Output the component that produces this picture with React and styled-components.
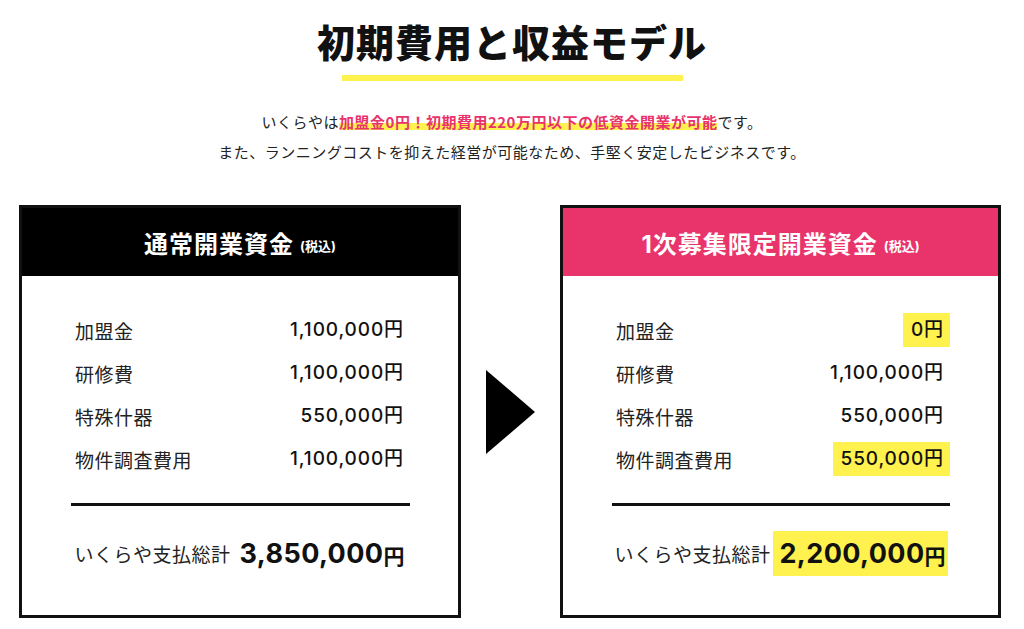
import React from "react";
import styled, { createGlobalStyle } from "styled-components";

const PINK = "#e8346b";
const YELLOW = "#fff24f";
const CJK = `"Noto Sans CJK JP", "Noto Sans", sans-serif`;
const NUM = `Inter, "Noto Sans CJK JP", sans-serif`;

const Global = createGlobalStyle`
  * { box-sizing: border-box; }
  html, body { margin: 0; padding: 0; background: #fff; }
  body { font-family: ${CJK}; color: #111; }
`;

const Page = styled.main`
  width: 1024px;
  display: flex;
  flex-direction: column;
  align-items: center;
  padding-top: 16px;
`;

const Title = styled.h1`
  margin: 0;
  font-family: ${CJK};
  font-weight: 900;
  font-size: 38px;
  line-height: 50px;
  letter-spacing: 1px;
  color: #111;
`;

const TitleBar = styled.div`
  width: 341px;
  height: 6px;
  margin-top: 9px;
  background: ${YELLOW};
`;

const Lead = styled.p`
  margin: 26px 0 0;
  font-size: 15px;
  letter-spacing: 0.5px;
  line-height: 30px;
  text-align: center;
  color: #222;
`;

const Em = styled.strong`
  color: ${PINK};
  font-weight: 700;
  background: linear-gradient(transparent 58%, ${YELLOW} 58%, ${YELLOW} 90%, transparent 90%);
`;

const Compare = styled.section`
  align-self: flex-start;
  display: flex;
  align-items: center;
  margin-top: 38px;
  padding-left: 19px;
`;

const Card = styled.div`
  width: ${(p) => p.$w}px;
  border: 3px solid #111;
  background: #fff;
`;

const CardHead = styled.div`
  height: 68px;
  background: ${(p) => p.$bg};
  color: #fff;
  display: flex;
  align-items: center;
  justify-content: center;
  font-weight: 700;
  font-family: ${NUM};
`;

const HeadMain = styled.span`
  font-size: 24px;
  letter-spacing: 1px;
`;

const HeadSub = styled.span`
  font-size: 13px;
  margin-left: 6px;
  margin-top: 6px;
`;

const CardBody = styled.div`
  padding: 37px 48px 39px 49px;
`;

const Rows = styled.div`
  display: flex;
  flex-direction: column;
  gap: 9px;
  padding-left: 4px;
`;

const Row = styled.div`
  display: flex;
  align-items: center;
  justify-content: space-between;
  height: 34px;
`;

const Label = styled.span`
  font-size: 19px;
  letter-spacing: 0.5px;
  color: #222;
`;

const Value = styled.span`
  font-family: ${NUM};
  font-size: 19px;
  font-weight: 450;
  letter-spacing: 0.9px;
  line-height: 34px;
  padding: 0 6px 0 8px;
  color: #111;
  background: ${(p) => (p.$mark ? YELLOW : "transparent")};
`;

const Divider = styled.hr`
  margin: 27px 0 0;
  border: 0;
  height: 3px;
  background: #111;
`;

const Total = styled.div`
  margin-top: 25px;
  height: 45px;
  display: flex;
  align-items: center;
  justify-content: center;
  white-space: nowrap;
`;

const TotalLabel = styled.span`
  font-size: 19px;
  letter-spacing: 0.5px;
  color: #222;
  flex-shrink: 0;
`;

const TotalAmount = styled.span`
  margin-left: 3px;
  height: 45px;
  display: inline-flex;
  align-items: center;
  flex-shrink: 0;
  padding: 0 2px 0 6px;
  background: ${(p) => (p.$mark ? YELLOW : "transparent")};
`;

const Num = styled.span`
  font-family: ${NUM};
  font-weight: 700;
  font-size: 27px;
  letter-spacing: 0.4px;
  color: #111;
`;

const Yen = styled.span`
  font-weight: 700;
  font-size: 21px;
  margin-top: 3px;
`;

const ArrowWrap = styled.div`
  width: 49px;
  height: 84px;
  margin: 0 25px;
  display: flex;
`;

const Arrow = () => (
  <ArrowWrap>
    <svg width="49" height="84" viewBox="0 0 49 84">
      <polygon points="0,0 49,42 0,84" fill="#000" />
    </svg>
  </ArrowWrap>
);

const CostCard = ({ width, bg, title, items, total, markTotal }) => (
  <Card $w={width}>
    <CardHead $bg={bg}>
      <HeadMain>{title}</HeadMain>
      <HeadSub>(税込)</HeadSub>
    </CardHead>
    <CardBody>
      <Rows>
        {items.map((it) => (
          <Row key={it.label}>
            <Label>{it.label}</Label>
            <Value $mark={it.mark}>{it.value}</Value>
          </Row>
        ))}
      </Rows>
      <Divider />
      <Total>
        <TotalLabel>いくらや支払総計</TotalLabel>
        <TotalAmount $mark={markTotal}>
          <Num>{total}</Num>
          <Yen>円</Yen>
        </TotalAmount>
      </Total>
    </CardBody>
  </Card>
);

export default function App() {
  return (
    <>
      <Global />
      <Page>
        <Title>初期費用と収益モデル</Title>
        <TitleBar />
        <Lead>
          いくらやは<Em>加盟金0円！初期費用220万円以下の低資金開業が可能</Em>です。
          <br />
          また、ランニングコストを抑えた経営が可能なため、手堅く安定したビジネスです。
        </Lead>
        <Compare>
          <CostCard
            width={442}
            bg="#000"
            title="通常開業資金"
            items={[
              { label: "加盟金", value: "1,100,000円" },
              { label: "研修費", value: "1,100,000円" },
              { label: "特殊什器", value: "550,000円" },
              { label: "物件調査費用", value: "1,100,000円" },
            ]}
            total="3,850,000"
          />
          <Arrow />
          <CostCard
            width={441}
            bg={PINK}
            title="1次募集限定開業資金"
            items={[
              { label: "加盟金", value: "0円", mark: true },
              { label: "研修費", value: "1,100,000円" },
              { label: "特殊什器", value: "550,000円" },
              { label: "物件調査費用", value: "550,000円", mark: true },
            ]}
            total="2,200,000"
            markTotal
          />
        </Compare>
      </Page>
    </>
  );
}
